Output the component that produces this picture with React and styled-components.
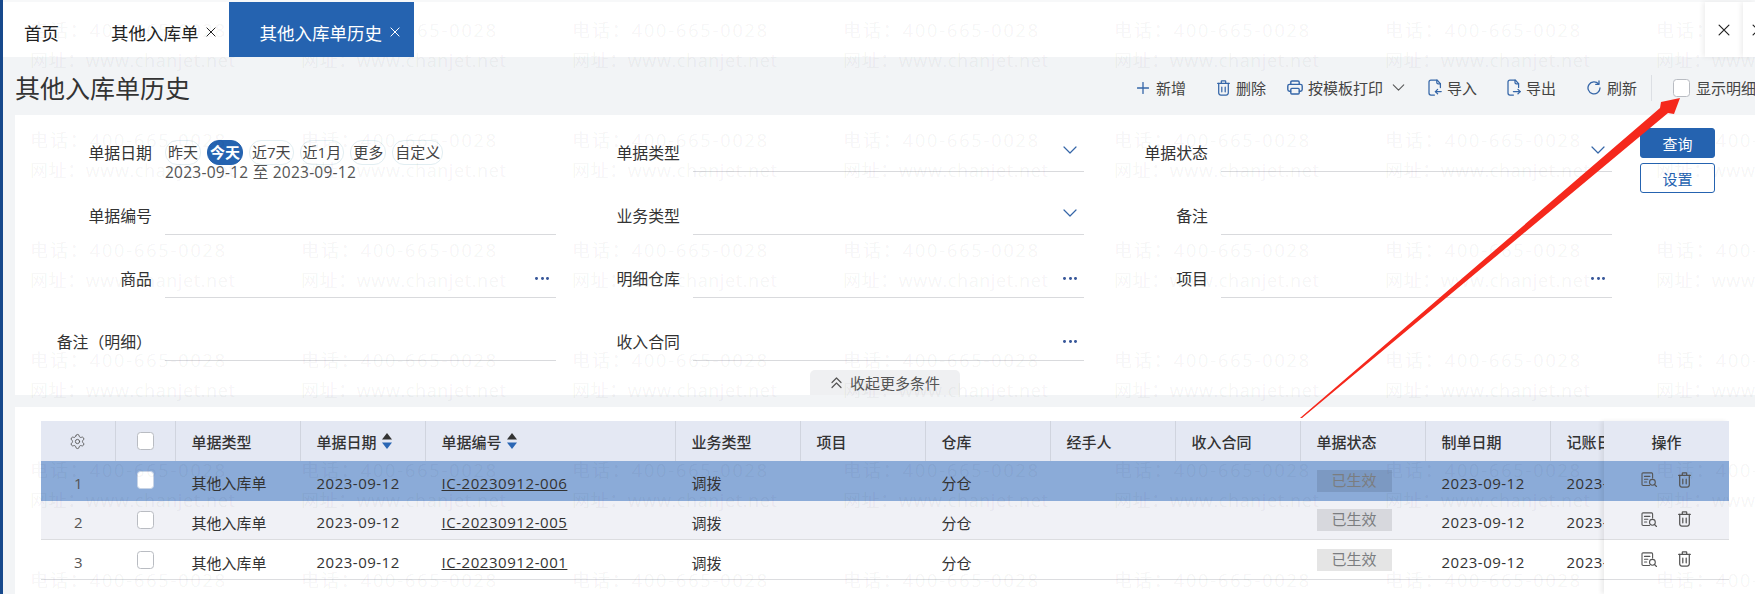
import React from 'react';
import styled, { createGlobalStyle } from 'styled-components';
import { Settings } from 'lucide-react';

const BLUE = '#2563b0';
const ICON = '#3566a8';
const FONT = '"Open Sans", "Noto Sans CJK SC", sans-serif';

const Global = createGlobalStyle`
  html, body { margin: 0; padding: 0; background: #fff; }
  body { font-family: ${FONT}; color: #333; }
  * { box-sizing: border-box; }
`;

const Page = styled.div`
  position: relative;
  width: 1755px;
  height: 594px;
  overflow: hidden;
  display: flex;
  background: #f2f4f6;
`;
const SideEdge = styled.div`
  width: 3px;
  flex: none;
  background: #17498c;
`;
const Main = styled.div`
  flex: 1;
  min-width: 0;
  display: flex;
  flex-direction: column;
`;

const TabBar = styled.nav`
  height: 57px;
  flex: none;
  display: flex;
  background: #fff;
  border-top: 2px solid #f7f8f9;
`;
const Tab = styled.div`
  position: relative;
  z-index: 2;
  display: flex;
  align-items: center;
  gap: ${p => (p.$active ? 8 : 7)}px;
  height: 55px;
  padding: 5px ${p => (p.$active ? 14 : 13)}px 0 31px;
  font-size: 17.5px;
  color: ${p => (p.$active ? '#fff' : '#222')};
  background: ${p => (p.$active ? BLUE : 'transparent')};
`;
const HomeTab = styled(Tab)`
  padding: 5px 21px 0;
`;
const CloseTab = styled.div`
  position: relative;
  z-index: 2;
  display: flex;
  align-items: center;
  height: 55px;
  background: #fff;
  box-shadow: -2px 0 5px rgba(0, 0, 0, 0.07);
  padding-left: ${p => p.$pad}px;
  width: ${p => p.$w}px;
  margin-left: ${p => (p.$auto ? 'auto' : '0')};
  overflow: hidden;
  color: #222;
`;

const Header = styled.header`
  height: 58px;
  flex: none;
  display: flex;
  align-items: center;
  justify-content: space-between;
  padding-left: 12px;
`;
const Title = styled.h1`
  margin: 0;
  font-size: 25px;
  font-weight: 400;
  line-height: 32px;
  color: #333;
  padding-top: 4px;
`;
const Toolbar = styled.div`
  display: flex;
  align-items: center;
  height: 26px;
  margin-right: -1px;
  padding-top: 3px;
`;
const Action = styled.div`
  display: flex;
  align-items: center;
  gap: ${p => p.$gap ?? 6}px;
  margin-left: ${p => p.$ml ?? 0}px;
  font-size: 15px;
  color: #444;
  white-space: nowrap;
  flex: none;
`;
const Divider = styled.div`
  width: 1px;
  height: 26px;
  background: #dcdfe4;
  margin-left: 14px;
`;
const Box = styled.span`
  display: inline-block;
  flex: none;
  width: 17px;
  height: 18px;
  background: #fff;
  border: 1px solid ${p => (p.$soft ? '#c8d4e6' : '#b9bcc2')};
  border-radius: 3.5px;
`;

const FormPanel = styled.section`
  margin-left: 12px;
  height: 280px;
  flex: none;
  background: #fff;
  display: flex;
  flex-direction: column;
`;
const FormGrid = styled.div`
  display: grid;
  grid-template-columns: repeat(3, 528px) 103px;
  grid-template-rows: 57px 63px 63px 63px;
  padding-left: 13px;
`;
const Cell = styled.div`
  display: grid;
  grid-template-columns: 124px 391px;
  column-gap: 13px;
  align-items: end;
`;
const Label = styled.label`
  text-align: right;
  font-size: 15.9px;
  line-height: 37px;
  color: #333;
  white-space: nowrap;
`;
const Field = styled.div`
  height: 38px;
  display: flex;
  align-items: center;
  justify-content: flex-end;
  padding: 0 7px 6px 0;
  border-bottom: 1.5px solid #d9dadd;
`;
const DateField = styled.div`
  align-self: start;
  height: 57px;
  padding-top: 25px;
`;
const Chips = styled.div`
  display: flex;
  gap: 6px;
`;
const Chip = styled.span`
  height: 25px;
  padding: 0 2px;
  border: 1px solid ${p => (p.$active ? BLUE : '#e2eef2')};
  border-radius: 12px;
  background: ${p => (p.$active ? BLUE : 'transparent')};
  color: ${p => (p.$active ? '#fff' : '#444')};
  font-size: 15px;
  font-weight: ${p => (p.$active ? 700 : 400)};
  line-height: 23px;
  white-space: nowrap;
`;
const DateRange = styled.div`
  font-size: 15.5px;
  line-height: 14px;
  letter-spacing: 0.25px;
  color: #555;
  white-space: nowrap;
`;
const Buttons = styled.div`
  grid-column: 4;
  grid-row: 1 / span 4;
  margin: 13px 0 0 28px;
  width: 75px;
  display: flex;
  flex-direction: column;
  gap: 5px;
`;
const Button = styled.button`
  position: relative;
  z-index: ${p => (p.$primary ? 2 : 0)};
  height: 30px;
  width: 75px;
  padding: 0;
  border: 1px solid ${BLUE};
  border-radius: 3px;
  font: 400 15px ${FONT};
  color: ${p => (p.$primary ? '#fff' : BLUE)};
  background: ${p => (p.$primary ? BLUE : 'transparent')};
`;
const CollapseRow = styled.div`
  flex: 1;
  display: flex;
  justify-content: center;
  align-items: flex-end;
`;
const Collapse = styled.div`
  width: 150px;
  height: 25px;
  display: flex;
  align-items: center;
  justify-content: center;
  gap: 7px;
  background: #eff0f2;
  border-radius: 5px 5px 0 0;
  font-size: 15px;
  color: #555;
`;

const TablePanel = styled.section`
  margin: 12px 0 0 12px;
  flex: 1;
  min-height: 0;
  background: #fff;
  padding: 14px 26px 0;
`;
const TableWrap = styled.div`
  display: flex;
  height: 100%;
`;
const Scroller = styled.div`
  width: 1563px;
  flex: none;
  overflow: hidden;
`;
const COLS = '74.5px 60px 125px 125px 250px repeat(8, 125px)';
const HeadRow = styled.div`
  display: grid;
  grid-template-columns: ${COLS};
  height: 40px;
  background: #e4e8f3;
  font-size: 15px;
  font-weight: 500;
  color: #333;
`;
const HeadCell = styled.div`
  display: flex;
  align-items: center;
  justify-content: ${p => (p.$center ? 'center' : 'flex-start')};
  gap: 5px;
  padding-left: ${p => (p.$center ? 0 : 16)}px;
  border-right: 1px solid #d0d4de;
  white-space: nowrap;
`;
const rowBg = { selected: '#8babd8', alt: '#f0f1f6', plain: '#fff' };
const Row = styled.div`
  display: grid;
  grid-template-columns: ${COLS};
  height: 39.67px;
  background: ${p => rowBg[p.$kind]};
  border-bottom: 1px solid ${p => (p.$kind === 'selected' ? 'transparent' : '#dcdde0')};
  font-size: 15px;
  color: #333;
`;
const RowCell = styled.div`
  display: flex;
  align-items: center;
  justify-content: ${p => (p.$center ? 'center' : 'flex-start')};
  padding: ${p => (p.$center ? '0' : '5px 0 0 16px')};
  white-space: nowrap;
`;
const IndexCell = styled(RowCell)`
  padding-top: 5px;
  color: #555;
`;
const Dated = styled.span`
  letter-spacing: 0.5px;
`;
const DocLink = styled.span`
  text-decoration: underline;
  letter-spacing: 0.55px;
`;
const Status = styled.span`
  width: 75px;
  height: 22px;
  margin-top: -4px;
  background: rgba(0, 0, 0, 0.1);
  color: #7b7d80;
  font-size: 15px;
  line-height: 21px;
  text-align: center;
`;
const FixedCol = styled.div`
  position: relative;
  z-index: 0;
  flex: 1;
  box-shadow: -3px 0 4px rgba(0, 0, 0, 0.07);
`;
const FixedHead = styled.div`
  height: 40px;
  background: #e4e8f3;
  font-size: 15px;
  font-weight: 500;
  color: #333;
  display: flex;
  align-items: center;
  justify-content: center;
`;
const FixedRow = styled.div`
  height: 39.67px;
  display: flex;
  align-items: center;
  gap: 20px;
  padding: 0 0 1px 37px;
  background: ${p => rowBg[p.$kind]};
  border-bottom: 1px solid ${p => (p.$kind === 'selected' ? 'transparent' : '#dcdde0')};
  color: #555;
`;

const Watermark = styled.div`
  position: absolute;
  inset: 0;
  z-index: 1;
  pointer-events: none;
  overflow: hidden;
  padding: 15px 0 0 30px;
  display: grid;
  grid-template-columns: repeat(7, 271px);
  grid-auto-rows: 110px;
  font-size: 18px;
  line-height: 30px;
  color: rgba(0, 0, 0, 0.055);
  white-space: nowrap;
`;
const Phone = styled.div`
  letter-spacing: 1.9px;
`;
const Site = styled.div`
  letter-spacing: 0.6px;
`;
const ArrowLayer = styled.svg`
  position: absolute;
  inset: 0;
  z-index: 3;
  pointer-events: none;
`;

const Glyph = ({ w = 14, h = 14, vb, children, sw = 1.3 }) => (
  <svg width={w} height={h} viewBox={vb || `0 0 ${w} ${h}`} fill="none" stroke="currentColor"
       strokeWidth={sw} strokeLinecap="round" strokeLinejoin="round" style={{ flex: 'none', display: 'block' }}>
    {children}
  </svg>
);
const IconWrap = styled.span`
  display: inline-flex;
  color: ${p => p.$c || ICON};
`;
const ChevronWrap = styled(IconWrap)`
  margin-left: 4px;
`;
const CloseIcon = ({ s = 10 }) => (
  <Glyph w={s} h={s} vb="0 0 11 11" sw={1.1}><path d="M1 1l9 9M10 1l-9 9" /></Glyph>
);
const TrashIcon = ({ w = 13, h = 16 }) => (
  <Glyph w={w} h={h} vb="0 0 13 16" sw={1.25}>
    <path d="M4.3 3V1.4c0-.3.2-.5.5-.5h3.4c.3 0 .5.2.5.5V3" />
    <path d="M.6 3.4h11.8" />
    <path d="M1.7 3.4v9.4c0 1.3.9 2.2 2.2 2.2h5.2c1.3 0 2.2-.9 2.2-2.2V3.4" />
    <path d="M4.8 7v4.8M8.2 7v4.8" />
  </Glyph>
);
const PrintIcon = () => (
  <Glyph w={16} h={15} sw={1.4}>
    <path d="M3.8 4.4V2.2c0-.7.5-1.2 1.2-1.2h6c.7 0 1.2.5 1.2 1.2v2.2" />
    <path d="M3.6 11.2H2.5C1.5 11.2.8 10.5.8 9.5V6.1c0-1 .7-1.7 1.7-1.7h11c1 0 1.7.7 1.7 1.7v3.4c0 1-.7 1.7-1.7 1.7h-1.1" />
    <rect x="3.8" y="8.4" width="8.4" height="5.6" rx="1" />
  </Glyph>
);
const ImportIcon = () => (
  <Glyph w={14} h={17} sw={1.25}>
    <path d="M12.4 8.6V4.6L9 1H3C1.9 1 1 1.9 1 3v11c0 1.1.9 2 2 2h3.4" />
    <path d="M8.8 1.2v2.2c0 .8.6 1.4 1.4 1.4h2.2" />
    <path d="M13.2 12.6H7.4" />
    <path d="M9.6 10.4l-2.2 2.2 2.2 2.2" />
  </Glyph>
);
const ExportIcon = () => (
  <Glyph w={14} h={17} sw={1.25}>
    <path d="M11.6 8.4V4.6L8.2 1H3C1.9 1 1 1.9 1 3v11c0 1.1.9 2 2 2h3.4" />
    <path d="M8 1.2v2.2c0 .8.6 1.4 1.4 1.4h2.2" />
    <path d="M6.4 12.6h6.8" />
    <path d="M11 10.4l2.2 2.2-2.2 2.2" />
  </Glyph>
);
const RefreshIcon = () => (
  <Glyph w={14} h={15} sw={1.3}>
    <path d="M11.6 4A6 6 0 1 0 13 7.9" />
    <path d="M12 .9v3.4H8.7" />
  </Glyph>
);
const PlusIcon = () => (
  <Glyph w={12} h={12} sw={1.3}><path d="M6 .5v11M.5 6h11" /></Glyph>
);
const DownIcon = ({ w = 14, h = 8 }) => (
  <Glyph w={w} h={h} vb="0 0 14 8" sw={1.2}><path d="M1 1l6 6 6-6" /></Glyph>
);
const DoubleUp = () => (
  <Glyph w={13} h={13} sw={1.2}><path d="M2 6.5l4.5-4.5L11 6.5M2 11.5L6.5 7l4.5 4.5" /></Glyph>
);
const DocSearch = () => (
  <Glyph w={17} h={15} sw={1.1}>
    <path d="M8.5 13.5H2.2C1.5 13.5 1 13 1 12.3V1.9C1 1.3 1.4.9 2 .9h8.6c.6 0 1 .4 1 1v4.2" />
    <path d="M3.5 4.4h5.4M3.5 7.2h3.4M3.5 10h2.2" />
    <circle cx="11.4" cy="10.3" r="2.9" />
    <path d="M13.5 12.5l2 2" />
  </Glyph>
);
const Dots = styled.span`
  display: inline-flex;
  gap: 2.6px;
  margin-top: 6px;
  & > i { width: 2.8px; height: 2.8px; border-radius: 50%; background: #38589a; display: block; }
`;
const More = () => <Dots><i /><i /><i /></Dots>;
const Sort = () => (
  <svg width="10" height="16" viewBox="0 0 10 16" style={{ flex: 'none' }}>
    <path d="M5 0l5 6.5H0z" fill="#333" />
    <path d="M5 16l5-6.5H0z" fill="#2a66b4" />
  </svg>
);

const forms = [
  ['单据编号', null], ['业务类型', 'down'], ['备注', null],
  ['商品', 'more'], ['明细仓库', 'more'], ['项目', 'more'],
  ['备注（明细）', null], ['收入合同', 'more'],
];
const FieldEnd = ({ kind }) =>
  kind === 'down' ? <IconWrap><DownIcon /></IconWrap> : kind === 'more' ? <More /> : null;

const heads = ['业务类型', '项目', '仓库', '经手人', '收入合同', '单据状态', '制单日期', '记账日期'];
const rows = [
  { n: 1, no: 'IC-20230912-006', kind: 'selected' },
  { n: 2, no: 'IC-20230912-005', kind: 'alt' },
  { n: 3, no: 'IC-20230912-001', kind: 'plain' },
];

export default function App() {
  return (
    <Page>
      <Global />
      <SideEdge />
      <Main>
        <TabBar>
          <HomeTab>首页</HomeTab>
          <Tab>其他入库单<CloseIcon /></Tab>
          <Tab $active>其他入库单历史<CloseIcon /></Tab>
          <CloseTab $auto $w={38} $pad={13}><CloseIcon s={12} /></CloseTab>
          <CloseTab $w={12} $pad={9}><CloseIcon s={12} /></CloseTab>
        </TabBar>
        <Header>
          <Title>其他入库单历史</Title>
          <Toolbar>
            <Action $gap={7}><IconWrap><PlusIcon /></IconWrap>新增</Action>
            <Action $ml={31}><IconWrap><TrashIcon /></IconWrap>删除</Action>
            <Action $ml={21} $gap={5}><IconWrap><PrintIcon /></IconWrap>按模板打印
              <ChevronWrap $c="#555"><DownIcon w={13} h={7} /></ChevronWrap>
            </Action>
            <Action $ml={23} $gap={5}><IconWrap><ImportIcon /></IconWrap>导入</Action>
            <Action $ml={30} $gap={5}><IconWrap><ExportIcon /></IconWrap>导出</Action>
            <Action $ml={31}><IconWrap><RefreshIcon /></IconWrap>刷新</Action>
            <Divider />
            <Action $ml={21}><Box />显示明细</Action>
          </Toolbar>
        </Header>
        <FormPanel>
          <FormGrid>
            <Cell>
              <Label>单据日期</Label>
              <DateField>
                <Chips>
                  <Chip>昨天</Chip>
                  <Chip $active>今天</Chip>
                  <Chip>近7天</Chip>
                  <Chip>近1月</Chip>
                  <Chip>更多</Chip>
                  <Chip>自定义</Chip>
                </Chips>
                <DateRange>2023-09-12 至 2023-09-12</DateRange>
              </DateField>
            </Cell>
            <Cell>
              <Label>单据类型</Label>
              <Field><IconWrap><DownIcon /></IconWrap></Field>
            </Cell>
            <Cell>
              <Label>单据状态</Label>
              <Field><IconWrap><DownIcon /></IconWrap></Field>
            </Cell>
            <Buttons>
              <Button $primary>查询</Button>
              <Button>设置</Button>
            </Buttons>
            {forms.map(([label, end]) => (
              <Cell key={label}>
                <Label>{label}</Label>
                <Field><FieldEnd kind={end} /></Field>
              </Cell>
            ))}
          </FormGrid>
          <CollapseRow>
            <Collapse><DoubleUp />收起更多条件</Collapse>
          </CollapseRow>
        </FormPanel>
        <TablePanel>
          <TableWrap>
            <Scroller>
              <HeadRow>
                <HeadCell $center><Settings size={17} strokeWidth={1.25} color="#555" /></HeadCell>
                <HeadCell $center><Box /></HeadCell>
                <HeadCell>单据类型</HeadCell>
                <HeadCell>单据日期<Sort /></HeadCell>
                <HeadCell>单据编号<Sort /></HeadCell>
                {heads.map(h => <HeadCell key={h}>{h}</HeadCell>)}
              </HeadRow>
              {rows.map(r => (
                <Row key={r.n} $kind={r.kind}>
                  <IndexCell $center>{r.n}</IndexCell>
                  <RowCell $center><Box $soft={r.kind === 'selected'} /></RowCell>
                  <RowCell>其他入库单</RowCell>
                  <RowCell><Dated>2023-09-12</Dated></RowCell>
                  <RowCell><DocLink>{r.no}</DocLink></RowCell>
                  <RowCell>调拨</RowCell>
                  <RowCell />
                  <RowCell>分仓</RowCell>
                  <RowCell />
                  <RowCell />
                  <RowCell><Status>已生效</Status></RowCell>
                  <RowCell><Dated>2023-09-12</Dated></RowCell>
                  <RowCell><Dated>2023-09-12</Dated></RowCell>
                </Row>
              ))}
            </Scroller>
            <FixedCol>
              <FixedHead>操作</FixedHead>
              {rows.map(r => (
                <FixedRow key={r.n} $kind={r.kind}>
                  <DocSearch />
                  <TrashIcon />
                </FixedRow>
              ))}
            </FixedCol>
          </TableWrap>
        </TablePanel>
      </Main>
      <Watermark>
        {Array.from({ length: 42 }, (_, i) => (
          <div key={i}>
            <Phone>电话：400-665-0028</Phone>
            <Site>网址：www.chanjet.net</Site>
          </div>
        ))}
      </Watermark>
      <ArrowLayer width="1755" height="594" viewBox="0 0 1755 594">
        <polygon
          points="1300,418 1660,108 1661,102 1680,98 1674,114 1668,113 1302,418"
          fill="#f5281c"
        />
      </ArrowLayer>
    </Page>
  );
}
